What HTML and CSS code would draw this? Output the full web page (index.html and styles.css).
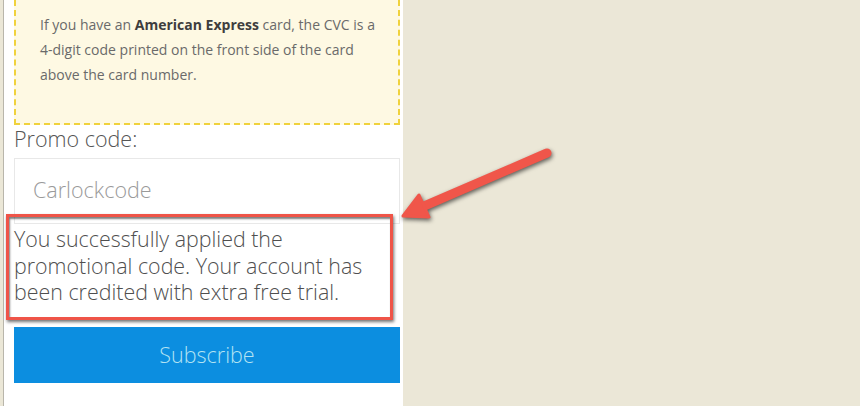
FILE: index.html
```html
<!DOCTYPE html>
<html lang="en">
<head>
    <meta charset="UTF-8">
    <title>Subscribe - Promo code</title>
    <link rel="stylesheet" href="styles.css">
</head>
<body>
    <div class="page">
        <div class="panel">
            <div class="cvc-note">
                If you have an <b>American Express</b> card, the CVC is a 4-digit code printed on the front side of the card above the card number.
            </div>
            <label class="promo-label" for="promo">Promo code:</label>
            <input class="promo-input" id="promo" type="text" placeholder="Carlockcode">
            <div class="promo-message">
                <p>You successfully applied the promotional code. Your account has been credited with extra free trial.</p>
                <div class="highlight-box"></div>
            </div>
            <button class="subscribe-btn">Subscribe</button>
        </div>
        <svg class="callout-arrow" width="860" height="406" viewBox="0 0 860 406">
            <line x1="547" y1="153" x2="422" y2="207" stroke="#f0564a" stroke-width="9" stroke-linecap="round"/>
            <polygon points="403,216 419,195 429,217" fill="#f0564a" stroke="#f0564a" stroke-width="3" stroke-linejoin="round"/>
        </svg>
    </div>
</body>
</html>
```

FILE: styles.css
```css
body {
    margin: 0;
    padding: 0;
    background: #ebe7d7;
    font-family: "Open Sans", "DejaVu Sans", sans-serif;
    height: 100vh;
    overflow: hidden;
}
.page {
    position: relative;
    display: flex;
    height: 100%;
    padding-left: 3px;
}
.panel {
    width: 386px;
    background: #fff;
    border-left: 1px solid #b9b6ab;
    padding: 0 3px 0 10px;
    display: flex;
    flex-direction: column;
}
.cvc-note {
    background: #fef9e3;
    border: 2px dashed #f0d23c;
    border-top: none;
    padding: 12px 20px 36px 24px;
    font-size: 14px;
    line-height: 25px;
    color: #6a6a6a;
}
.cvc-note b {
    color: #3e3e3e;
}
.promo-label {
    font-size: 21.5px;
    font-weight: 300;
    line-height: 26px;
    color: #555;
    margin-top: 1px;
    margin-bottom: 6px;
}
.promo-input {
    height: 66px;
    box-sizing: border-box;
    border: 1px solid #e8e8e8;
    padding: 0 18px 4px;
    font-family: inherit;
    font-size: 21.5px;
    font-weight: 300;
    color: #555;
    outline: none;
}
.promo-input::placeholder {
    color: #9a9a9a;
}
.promo-message {
    position: relative;
    margin-top: 2px;
    font-size: 21.4px;
    font-weight: 300;
    line-height: 26.5px;
    color: #4f4f4f;
}
.promo-message p {
    margin: 0;
    max-width: 366px;
}
.highlight-box {
    position: absolute;
    left: -8px;
    top: -12px;
    width: 381px;
    height: 100px;
    border: 3px solid #ef5448;
    box-shadow: 1px 2px 3px rgba(0, 0, 0, 0.55), inset 1px 2px 2px rgba(0, 0, 0, 0.5);
}
.subscribe-btn {
    margin-top: 21px;
    height: 56px;
    border: none;
    background: #0c8ee0;
    color: #b3e3f3;
    font-family: inherit;
    font-size: 21.5px;
    font-weight: 300;
}
.callout-arrow {
    position: absolute;
    left: 0;
    top: 0;
    filter: drop-shadow(1px 2px 2px rgba(0, 0, 0, 0.6));
    pointer-events: none;
}
```
